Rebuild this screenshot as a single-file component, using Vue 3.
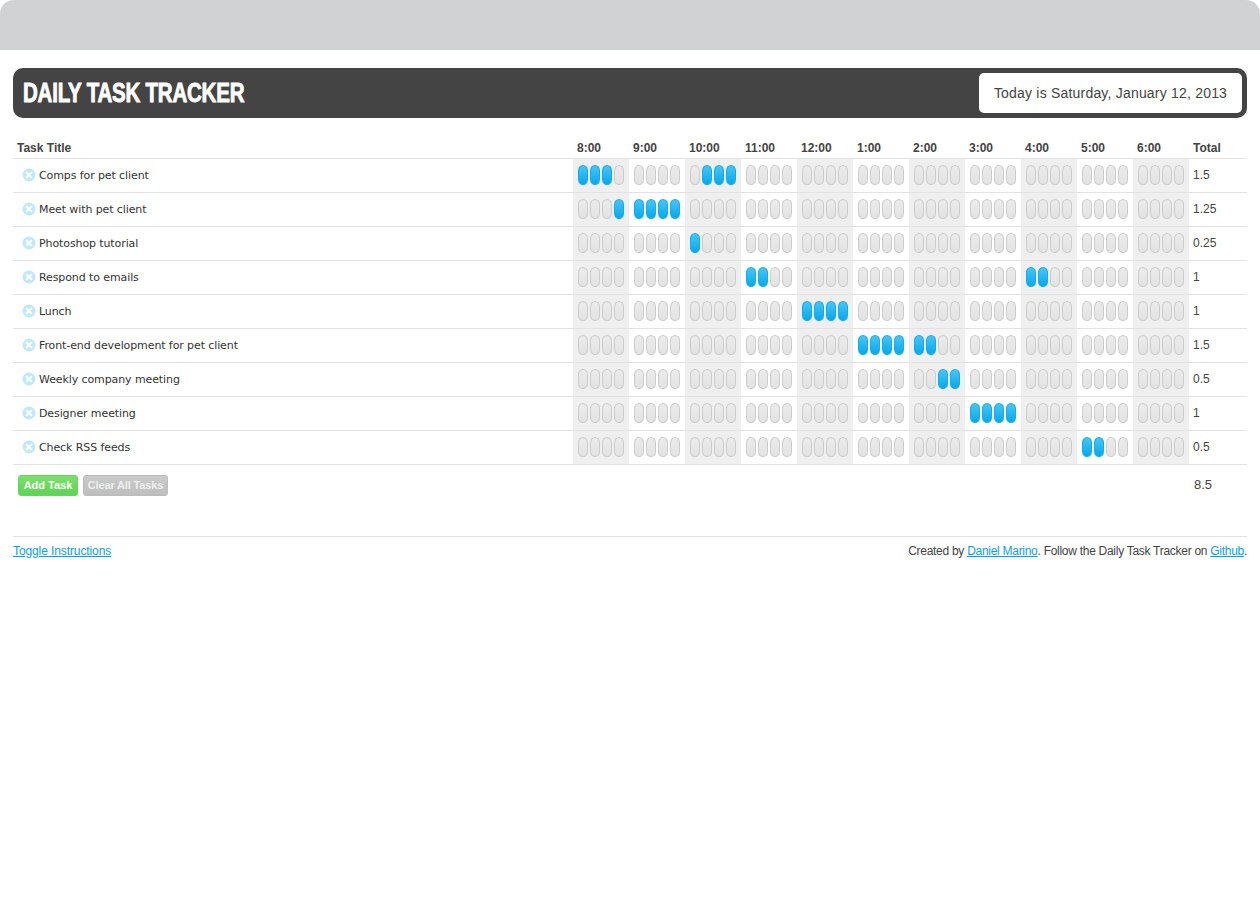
<template>
  <div class="page">
    <div class="top-bar"></div>
    <div class="content">
      <header class="title-bar">
        <h1>DAILY TASK TRACKER</h1>
        <div class="today">Today is Saturday, January 12, 2013</div>
      </header>

      <div class="row head">
        <div class="name">Task Title</div>
        <div v-for="h in hours" :key="h" class="hour-label">{{ h }}</div>
        <div class="total">Total</div>
      </div>

      <div v-for="task in tasks" :key="task.title" class="row">
        <div class="name">
          <svg class="remove" width="14" height="14" viewBox="0 0 14 14">
            <circle cx="7" cy="7" r="6.5" fill="#bfe9fb" />
            <path d="M4.7 4.7l4.6 4.6M9.3 4.7l-4.6 4.6" stroke="#fff" stroke-width="2.2" stroke-linecap="round" />
          </svg>
          <span>{{ task.title }}</span>
        </div>
        <div v-for="(h, i) in hours" :key="h" class="hour" :class="{ shaded: i % 2 === 0 }">
          <span v-for="q in 4" :key="q" class="pill" :class="{ on: isOn(task, i, q - 1) }"></span>
        </div>
        <div class="total">{{ task.total }}</div>
      </div>

      <div class="row actions">
        <div class="buttons">
          <button class="btn add">Add Task</button>
          <button class="btn clear">Clear All Tasks</button>
        </div>
        <div class="total grand">8.5</div>
      </div>

      <footer class="footer">
        <a class="toggle" href="#">Toggle Instructions</a>
        <p>Created by <a href="#">Daniel Marino</a>. Follow the Daily Task Tracker on <a href="#">Github</a>.</p>
      </footer>
    </div>
  </div>
</template>

<script setup>
const hours = ['8:00', '9:00', '10:00', '11:00', '12:00', '1:00', '2:00', '3:00', '4:00', '5:00', '6:00']

// slots are quarter hours counted from 8:00
const tasks = [
  { title: 'Comps for pet client', total: '1.5', slots: [0, 1, 2, 9, 10, 11] },
  { title: 'Meet with pet client', total: '1.25', slots: [3, 4, 5, 6, 7] },
  { title: 'Photoshop tutorial', total: '0.25', slots: [8] },
  { title: 'Respond to emails', total: '1', slots: [12, 13, 32, 33] },
  { title: 'Lunch', total: '1', slots: [16, 17, 18, 19] },
  { title: 'Front-end development for pet client', total: '1.5', slots: [20, 21, 22, 23, 24, 25] },
  { title: 'Weekly company meeting', total: '0.5', slots: [26, 27] },
  { title: 'Designer meeting', total: '1', slots: [28, 29, 30, 31] },
  { title: 'Check RSS feeds', total: '0.5', slots: [36, 37] }
]

const isOn = (task, hour, quarter) => task.slots.includes(hour * 4 + quarter)
</script>

<style>
html,
body {
  background: #fff;
}
</style>

<style scoped>
.page {
  font-family: "Liberation Sans", Arial, sans-serif;
  color: #444;
}

.top-bar {
  height: 50px;
  background: #d1d2d4;
  border-radius: 14px 14px 0 0;
}

.content {
  padding: 18px 13px 0;
}

.title-bar {
  display: flex;
  align-items: center;
  justify-content: space-between;
  height: 50px;
  padding: 0 5px 0 10px;
  box-sizing: border-box;
  background: #444;
  border-radius: 10px;
  margin-bottom: 18px;
}

/* no condensed black face installed, so squeeze the bold one */
.title-bar h1 {
  margin: 0;
  font-size: 27px;
  font-weight: 700;
  letter-spacing: -0.3px;
  color: #fff;
  -webkit-text-stroke: 0.9px #fff;
  transform: scaleX(0.76);
  transform-origin: left center;
}

.today {
  width: 263px;
  height: 40px;
  line-height: 40px;
  text-align: center;
  background: #fff;
  border-radius: 5px;
  font-size: 14px;
  letter-spacing: 0.2px;
  color: #444;
}

.row {
  display: grid;
  grid-template-columns: 560px repeat(11, 56px) 58px;
  height: 34px;
  box-sizing: border-box;
  border-bottom: 1px solid #e2e2e2;
  align-items: stretch;
}

.head {
  height: 23px;
  font-size: 12px;
  font-weight: 700;
  line-height: 24px;
}

.hour-label {
  padding-left: 4px;
}

.name {
  display: flex;
  align-items: center;
  padding-left: 9px;
  font-family: "DejaVu Sans", sans-serif;
  font-size: 11px;
  letter-spacing: -0.1px;
  color: #333;
}

.head .name {
  padding-left: 4px;
  font-family: "Liberation Sans", Arial, sans-serif;
  font-size: 12px;
  letter-spacing: 0;
  color: #444;
}

.remove {
  margin: -1px 3px 0 0;
  flex: none;
}

.hour {
  display: flex;
  gap: 2px;
  align-items: center;
  padding: 0 0 1px 5px;
}

.shaded {
  background: #efefef;
}

.pill {
  width: 10px;
  height: 20px;
  box-sizing: border-box;
  border: 1px solid #ccc;
  border-radius: 5px / 5.5px;
  background: linear-gradient(#ebebeb, #e3e3e3);
}

.pill.on {
  border-color: #14adec;
  background: linear-gradient(#46c6f8, #08a8ea);
}

.total {
  padding-left: 4px;
  line-height: 33px;
  font-size: 12px;
}

.head .total {
  line-height: 24px;
}

.actions {
  display: flex;
  justify-content: space-between;
  height: auto;
  border-bottom: none;
}

.buttons {
  display: flex;
  gap: 5px;
  padding: 10px 0 0 5px;
}

.btn {
  height: 21px;
  padding: 0 0 2px;
  border: 1px solid;
  border-radius: 3px;
  font-family: "Liberation Sans", Arial, sans-serif;
  font-size: 11px;
  font-weight: 700;
  color: #fff;
}

.add {
  width: 60px;
  background: linear-gradient(#7ddf6b, #5cd455);
  border-color: #66d45e;
}

.clear {
  width: 85px;
  background: linear-gradient(#cacaca, #bebebe);
  border-color: #bbb;
  letter-spacing: -0.15px;
  color: #eee;
}

.grand {
  width: 58px;
  box-sizing: border-box;
  padding: 3px 0 0 5px;
  font-size: 13px;
}

.footer {
  display: flex;
  justify-content: space-between;
  align-items: center;
  margin-top: 35px;
  border-top: 1px solid #e2e2e2;
  height: 28px;
  font-size: 12px;
}

.toggle {
  letter-spacing: -0.1px;
}

.footer p {
  margin: 0;
  letter-spacing: -0.28px;
}

.footer a {
  color: #0a9ee8;
}
</style>
